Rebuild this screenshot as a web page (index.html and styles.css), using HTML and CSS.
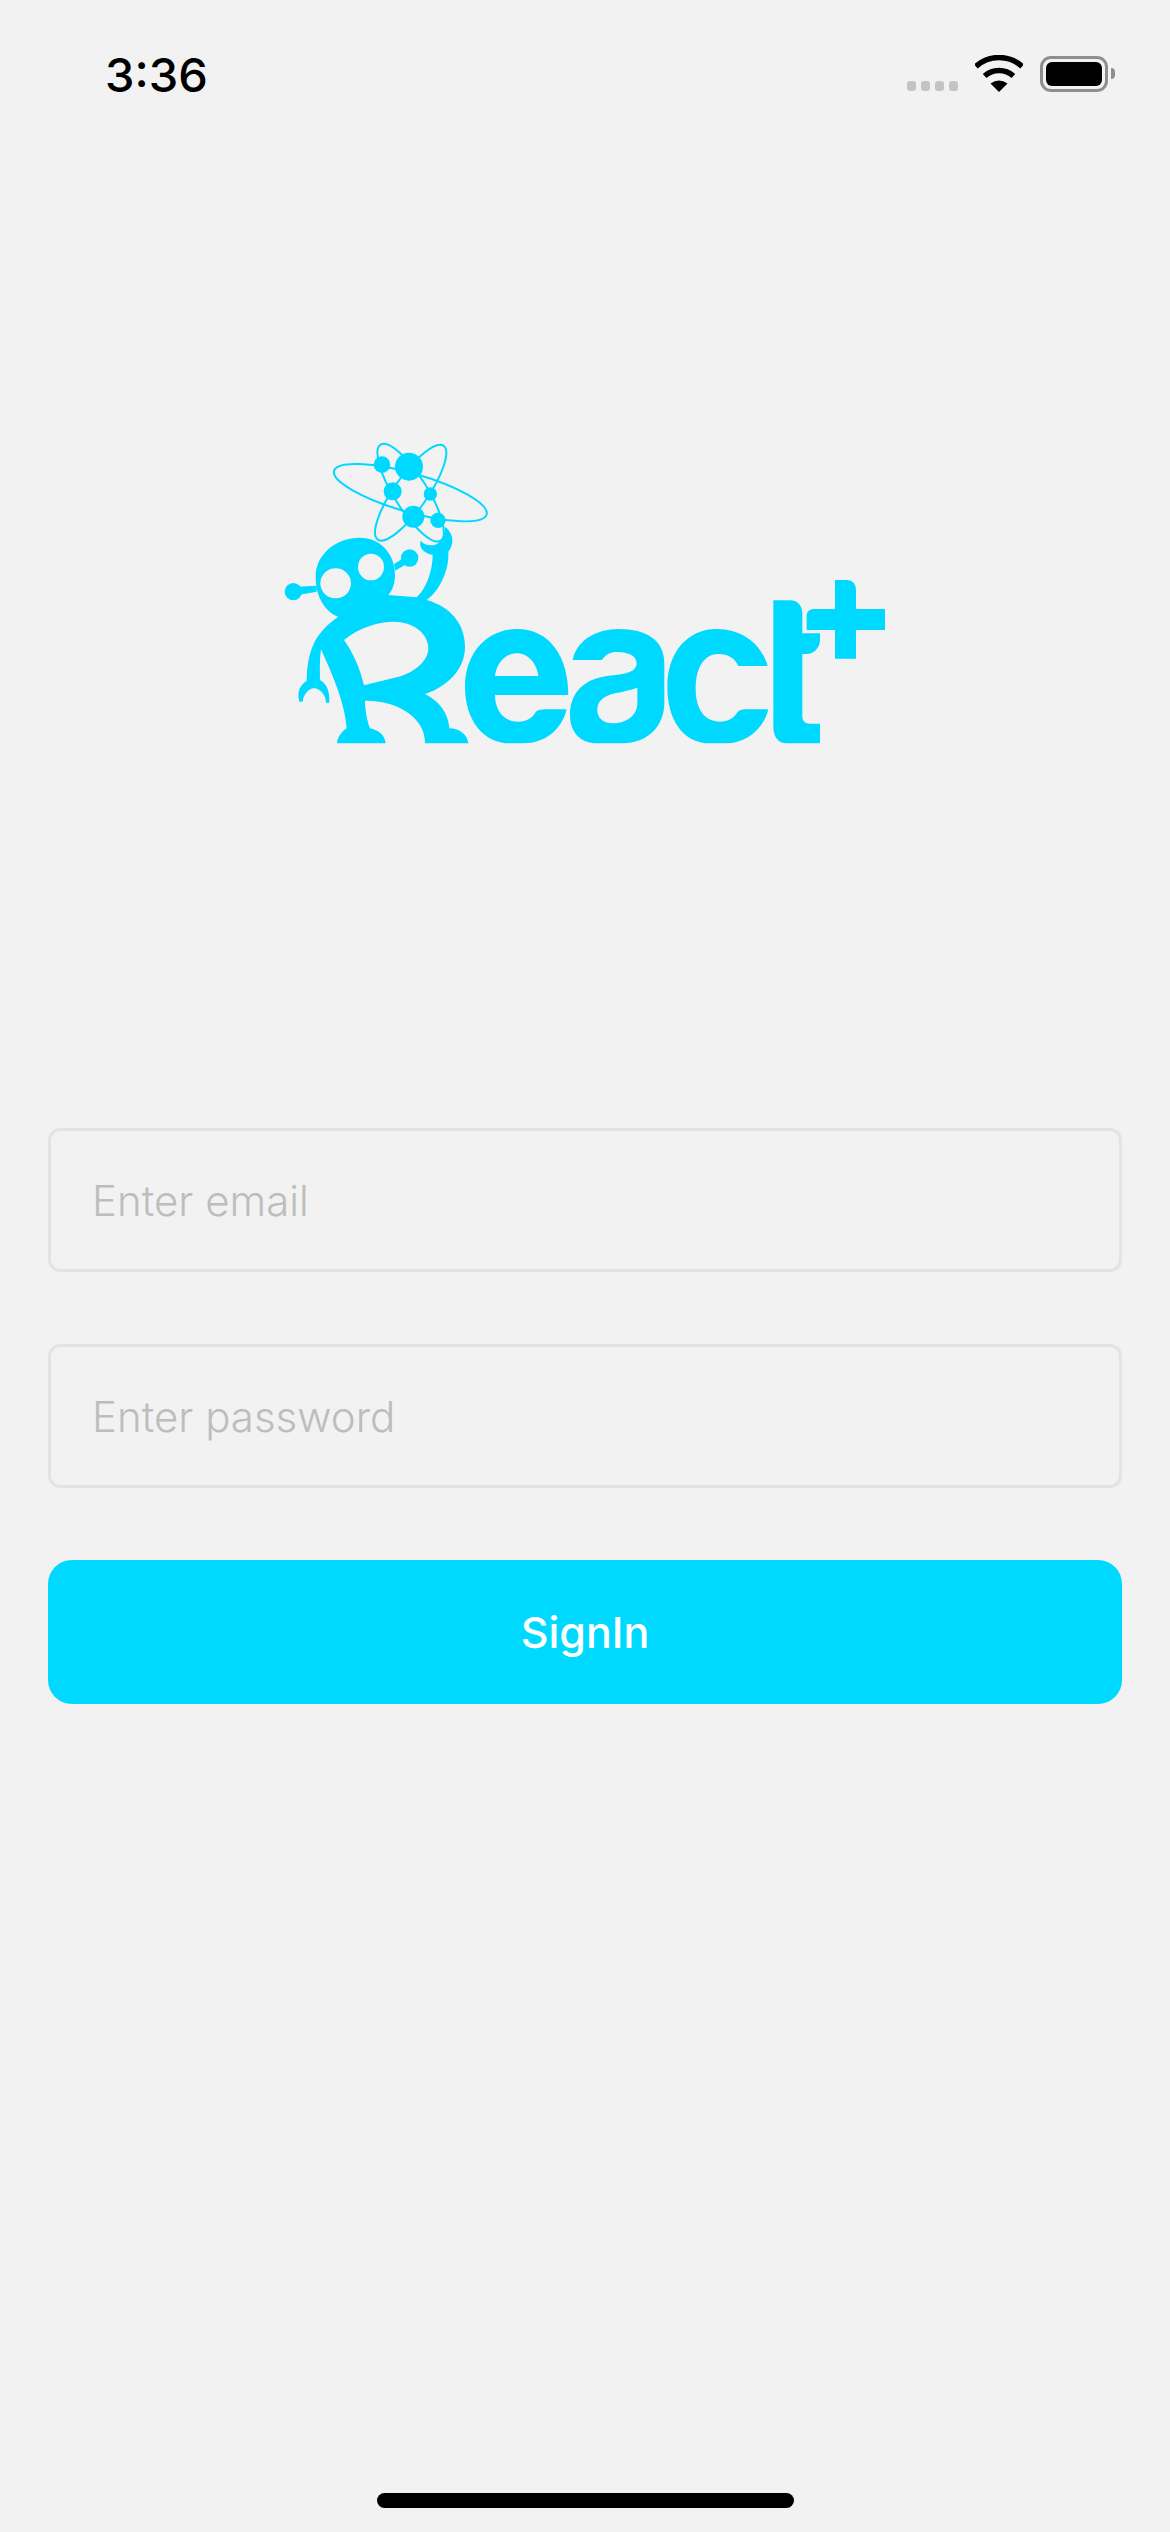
FILE: index.html
```html
<!DOCTYPE html>
<html lang="en">
<head>
<meta charset="utf-8">
<title>Sign in</title>
<link rel="stylesheet" href="styles.css">
</head>
<body>
<main class="screen">
  <header class="status-bar">
    <span class="time">3:36</span>
    <div class="status-icons">
      <div class="signal"><i></i><i></i><i></i><i></i></div>
      <svg class="wifi" viewBox="0 0 48 37" width="48" height="37" aria-hidden="true">
        <path d="M0.9 11.4A34.5 34.5 0 0 1 47.1 11.4" fill="none" stroke="#000" stroke-width="5.5"/>
        <path d="M9.6 21A21.5 21.5 0 0 1 38.4 21" fill="none" stroke="#000" stroke-width="5.5"/>
        <path d="M24 37L15.5 28.5Q24 22.5 32.5 28.5Z" fill="#000"/>
      </svg>
      <div class="battery"><div class="battery-level"></div></div>
      <div class="battery-nub"></div>
    </div>
  </header>

  <div class="logo-wrap">
    <svg class="logo" viewBox="270 420 630 340" width="630" height="340" role="img" aria-label="React+ logo">
      <g transform="translate(270 420) scale(0.33333)">
        <g fill="none" stroke="#00d9ff" stroke-width="6">
          <ellipse cx="421" cy="218" rx="238" ry="58" transform="rotate(16 421 218)"/>
          <ellipse cx="422" cy="218" rx="172" ry="50" transform="rotate(-55 422 218)"/>
          <ellipse cx="422" cy="218" rx="170" ry="50" transform="rotate(58 422 218)"/>
        </g>
        <g fill="#00d9ff">
          <circle cx="336" cy="134" r="25"/>
          <circle cx="417" cy="140" r="42"/>
          <circle cx="368" cy="214" r="27"/>
          <circle cx="481" cy="222" r="20"/>
          <circle cx="430" cy="290" r="33"/>
          <circle cx="504" cy="301" r="23"/>
          <circle cx="70" cy="515" r="26"/>
          <circle cx="419" cy="414" r="26"/>
          <path d="M80 500L140 497L140 515L85 525Z"/>
          <path d="M372 432L405 412L410 432L375 452Z"/>
          <path d="M137 470C137 405 195 353 270 353C330 353 375 400 375 465C375 490 368 510 355 525L440 532C470 505 488 450 488 405C465 400 445 385 452 362C470 385 525 385 525 320C545 335 558 365 535 395C538 450 510 510 470 540C540 560 585 610 585 680C585 750 530 800 465 822C510 845 535 880 538 925C570 925 592 945 595 970L465 970C468 900 390 840 285 842C285 870 292 905 300 925C325 930 345 945 347 970L201 970C203 950 215 935 230 925C225 850 190 770 153 688C148 720 150 750 150 780C170 790 180 815 178 848L168 848C168 825 150 805 132 805C115 805 100 825 98 845L88 845C80 815 90 795 110 782C112 700 130 640 205 590C165 575 137 530 137 470ZM222 660C250 700 270 745 282 796L380 772C430 760 475 725 475 685C475 640 430 605 370 605C330 605 270 620 222 660Z" fill-rule="evenodd"/>
          <path d="M895 825L675 825C675 870 700 905 745 905C770 905 785 895 795 880C800 870 810 868 830 868L890 868C875 930 825 970 760 970L720 970C640 970 585 900 585 800C585 700 650 627 740 627C840 627 895 710 895 825ZM675 768L805 768C800 730 775 700 740 700C705 700 680 730 675 768Z" fill-rule="evenodd"/>
        </g>
        <ellipse cx="197" cy="490" rx="46" ry="45" fill="#f2f2f2"/>
        <ellipse cx="303" cy="441" rx="39" ry="40" fill="#f2f2f2"/>
      </g>
      <g transform="translate(540 560) scale(0.33333)" fill="#00d9ff">
        <path d="M98 300C110 240 170 207 235 207C320 207 373 240 373 310L373 430C373 500 320 550 250 550L170 550C125 550 90 520 90 465C90 400 130 360 190 350C230 343 290 345 290 310C290 285 260 276 230 276C210 276 200 282 185 300ZM292 383C270 390 250 395 225 400C195 408 172 420 172 450C172 475 190 490 220 490C260 490 292 465 292 430Z" fill-rule="evenodd"/>
        <path d="M683 318L595 318C585 295 565 282 535 282C495 282 467 320 467 385C467 450 495 485 540 485C565 485 580 475 590 460C597 450 605 448 620 448L685 448C670 510 615 550 560 550L510 550C430 550 382 480 382 380C382 280 440 207 530 207C610 207 665 255 683 318Z"/>
        <path d="M700 121L750 121C775 121 787 140 787 160L787 220L840 220L840 240C840 265 820 282 800 282L787 282L787 470C787 482 795 491 810 491L840 491L840 550L740 550C715 550 700 530 700 500Z"/>
        <path d="M885 60L920 60C938 60 948 72 948 90L948 147L1035 147L1035 210L948 210L948 296L885 296L885 210L800 210L800 165C800 155 810 147 822 147L885 147Z"/>
      </g>
    </svg>
  </div>

  <form class="form">
    <input class="field" type="email" placeholder="Enter email">
    <input class="field" type="password" placeholder="Enter password">
    <button class="submit" type="button">SignIn</button>
  </form>

  <div class="home-indicator"></div>
</main>
</body>
</html>
```

FILE: styles.css
```css
* {
  box-sizing: border-box;
}

html,
body {
  margin: 0;
  padding: 0;
  background: #f2f2f2;
}

.screen {
  display: flex;
  flex-direction: column;
  width: 1170px;
  height: 2532px;
  overflow: hidden;
  background: #f2f2f2;
  font-family: Inter, "Liberation Sans", sans-serif;
}

.status-bar {
  display: flex;
  justify-content: space-between;
  align-items: flex-start;
  height: 120px;
  padding: 47px 55px 0 105px;
}

.time {
  font-size: 47px;
  line-height: 56px;
  font-weight: 500;
  color: #000;
}

.status-icons {
  display: flex;
  align-items: flex-start;
  padding-top: 8px;
}

.signal {
  display: flex;
  gap: 5px;
  margin: 26px 17px 0 0;
}

.signal i {
  display: block;
  width: 9px;
  height: 10px;
  border-radius: 3px;
  background: #c4c4c4;
}

.wifi {
  display: block;
  margin-right: 17px;
}

.battery {
  width: 68px;
  height: 36px;
  margin-top: 1px;
  padding: 3px;
  border: 3px solid #8e8e8e;
  border-radius: 11px;
}

.battery-level {
  width: 100%;
  height: 100%;
  border-radius: 6px;
  background: #000;
}

.battery-nub {
  width: 4px;
  height: 11px;
  margin: 13px 0 0 3px;
  border-radius: 0 4px 4px 0;
  background: #8e8e8e;
}

.logo-wrap {
  display: flex;
  padding: 300px 0 0 270px;
}

.logo {
  display: block;
}

.form {
  display: flex;
  flex-direction: column;
  gap: 72px;
  margin-top: 368px;
  padding: 0 48px;
}

.field {
  display: block;
  width: 100%;
  height: 144px;
  margin: 0;
  padding: 0 41px;
  border: 3px solid #e3e3e3;
  border-radius: 12px;
  outline: none;
  background: transparent;
  font-family: Inter, "Liberation Sans", sans-serif;
  font-size: 42px;
  font-weight: 300;
  color: #333;
}

.field::placeholder {
  color: #bdbdbd;
  opacity: 1;
}

.submit {
  display: block;
  width: 100%;
  height: 144px;
  padding: 0;
  border: 0;
  border-radius: 24px;
  background: #00d9ff;
  font-family: Inter, "Liberation Sans", sans-serif;
  font-size: 43px;
  font-weight: 500;
  color: #fff;
}

.home-indicator {
  width: 417px;
  height: 15px;
  margin: auto auto 24px;
  border-radius: 8px;
  background: #000;
}
```
